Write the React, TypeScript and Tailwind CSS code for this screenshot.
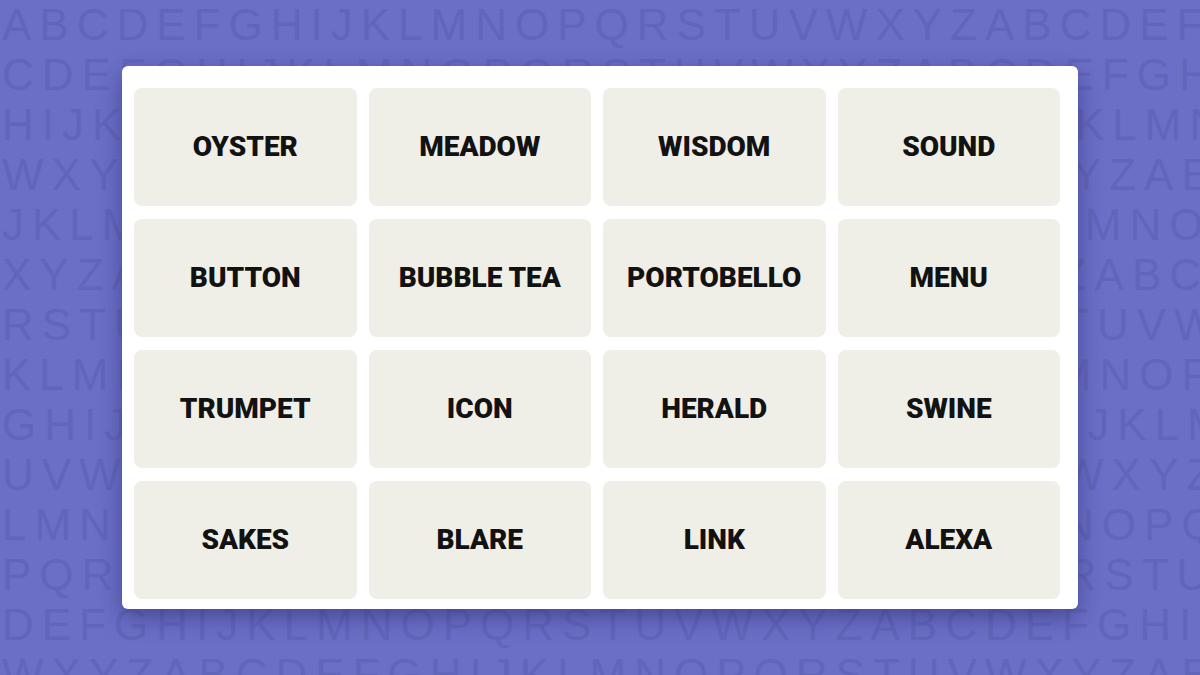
import React from "react";

const ALPHABET = "ABCDEFGHIJKLMNOPQRSTUVWXYZ";

// First letter of each background row; every row continues through the alphabet.
const ROW_STARTS = ["A", "C", "H", "W", "J", "X", "R", "K", "G", "U", "L", "P", "D", "W"];

function rowText(start: string): string {
  const i = ALPHABET.indexOf(start);
  let s = "";
  for (let k = 0; k < 40; k++) s += ALPHABET[(i + k) % 26];
  return s;
}

const WORDS = [
  "OYSTER",
  "MEADOW",
  "WISDOM",
  "SOUND",
  "BUTTON",
  "BUBBLE TEA",
  "PORTOBELLO",
  "MENU",
  "TRUMPET",
  "ICON",
  "HERALD",
  "SWINE",
  "SAKES",
  "BLARE",
  "LINK",
  "ALEXA",
];

export default function App() {
  return (
    <div className="relative w-[1200px] h-[675px] overflow-hidden bg-[#6b6fc6]">
      {/* alphabet wallpaper */}
      <div
        aria-hidden
        className="absolute inset-0 pl-[2px] text-[44px] leading-[50px] tracking-[8px] text-[#6266bb] whitespace-nowrap select-none"
        style={{ fontFamily: '"Liberation Sans", Arial, sans-serif' }}
      >
        {ROW_STARTS.map((s, i) => (
          <div key={i}>{rowText(s)}</div>
        ))}
      </div>

      {/* puzzle board */}
      <div className="relative pt-[66px] pl-[122px]">
        <div className="w-[956px] h-[543px] rounded-md bg-white pl-3 pr-[18px] pt-[22px] pb-[10px] shadow-[0_8px_22px_rgba(35,35,100,0.5)]">
          <div className="grid grid-cols-4 grid-rows-4 gap-x-3 gap-y-[13px] h-full">
            {WORDS.map((w) => (
              <div
                key={w}
                className="flex items-center justify-center rounded-lg bg-[#efeee7] text-[28px] font-black text-[#121212]"
                style={{ fontFamily: 'Roboto, "Noto Sans", sans-serif' }}
              >
                {w}
              </div>
            ))}
          </div>
        </div>
      </div>
    </div>
  );
}
